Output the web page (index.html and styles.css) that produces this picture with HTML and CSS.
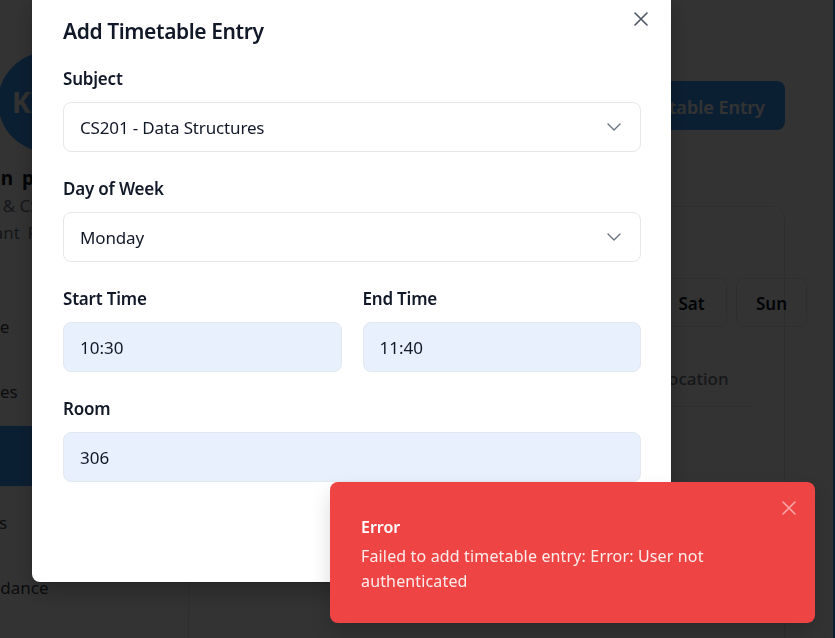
FILE: index.html
```html
<!DOCTYPE html>
<html lang="en">
<head>
<meta charset="utf-8">
<title>Timetable</title>
<link rel="stylesheet" href="styles.css">
</head>
<body>
<div class="app">
  <aside class="sidebar">
    <div class="profile">
      <div class="avatar">KI</div>
      <div class="name">Kiran patel</div>
      <div class="dept">IT &amp; CSE</div>
      <div class="role">Assistant Professor</div>
    </div>
    <nav class="nav">
      <a class="nav-item i-home">Home</a>
      <a class="nav-item i-classes">Classes</a>
      <a class="nav-item active">Timetable</a>
      <a class="nav-item i-marks">Marks</a>
      <a class="nav-item i-att">Attendance</a>
    </nav>
  </aside>
  <main class="main">
    <header class="page-head">
      <h1 class="page-title">Timetable</h1>
      <button class="btn-primary">Add Timetable Entry</button>
    </header>
    <section class="card">
      <h2 class="card-title">Weekly Schedule</h2>
      <div class="days">
        <span class="day">Mon</span><span class="day">Tue</span><span class="day">Wed</span><span class="day">Thu</span><span class="day">Fri</span><span class="day">Sat</span><span class="day">Sun</span>
      </div>
      <div class="table-head">
        <span class="th">Subject</span><span class="th">Time</span><span class="th">Room</span><span class="th th-loc">Location</span>
      </div>
    </section>
  </main>
  <div class="edge"></div>
</div>

<div class="overlay"></div>

<div class="modal">
  <button class="modal-close" aria-label="Close">
    <svg viewBox="0 0 24 24" width="24" height="24"><path d="M18 6L6 18M6 6l12 12"/></svg>
  </button>
  <h2 class="modal-title">Add Timetable Entry</h2>
  <div class="field">
    <label class="label">Subject</label>
    <div class="select"><span>CS201 - Data Structures</span>
      <svg viewBox="0 0 24 24" width="24" height="24"><path d="M6 9l6 6 6-6"/></svg></div>
  </div>
  <div class="field">
    <label class="label">Day of Week</label>
    <div class="select"><span>Monday</span>
      <svg viewBox="0 0 24 24" width="24" height="24"><path d="M6 9l6 6 6-6"/></svg></div>
  </div>
  <div class="row2">
    <div class="field">
      <label class="label">Start Time</label>
      <div class="input">10:30</div>
    </div>
    <div class="field">
      <label class="label">End Time</label>
      <div class="input">11:40</div>
    </div>
  </div>
  <div class="field">
    <label class="label">Room</label>
    <div class="input">306</div>
  </div>
  <div class="modal-foot">
    <button class="btn-ghost">Cancel</button>
    <button class="btn-save">Add Entry</button>
  </div>
</div>

<div class="toast">
  <button class="toast-close" aria-label="Close">
    <svg viewBox="0 0 24 24" width="24" height="24"><path d="M18 6L6 18M6 6l12 12"/></svg>
  </button>
  <div class="toast-title">Error</div>
  <div class="toast-msg">Failed to add timetable entry: Error: User not authenticated</div>
</div>
</body>
</html>
```

FILE: styles.css
```css
* { box-sizing: border-box; margin: 0; padding: 0; }
html, body { width: 835px; height: 638px; overflow: hidden; }
body {
  font-family: "Noto Sans", "Open Sans", sans-serif;
  background: #ffffff;
  color: #111827;
  font-size: 17px;
}
button { font-family: inherit; border: none; background: none; }

.app { display: flex; height: 638px; }

/* ---------- background page ---------- */
.sidebar {
  width: 188px;
  flex-shrink: 0;
  overflow: hidden;
  display: flex;
  flex-direction: column;
}
.profile { padding-top: 52px; display: flex; flex-direction: column; }
.avatar {
  width: 100px; height: 100px; border-radius: 50%;
  background: #3b9cff; color: #ffffff;
  font-weight: 700; font-size: 28px;
  display: flex; align-items: center; padding-left: 14px;
  margin-left: -2px;
}
.name { font-weight: 700; font-size: 19px; line-height: 27px; margin-top: 13px; margin-left: -37px; white-space: nowrap; word-spacing: 4px; }
.dept { color: #6b7280; line-height: 27px; margin-left: -17px; white-space: nowrap; }
.role { color: #6b7280; line-height: 27px; margin-left: -52px; white-space: nowrap; word-spacing: 3px; }

.nav { display: flex; flex-direction: column; gap: 5px; margin-top: 50px; }
.nav-item {
  height: 60px; display: flex; align-items: center;
  color: #374151; white-space: nowrap; font-size: 17px;
}
.i-home { margin-left: -39px; }
.i-classes { margin-left: -41px; }
.i-marks { margin-left: -42px; }
.i-att { margin-left: -43px; }
.nav-item.active { background: #3b9cff; color: #ffffff; padding-left: 60px; }
.i-marks, .i-att { position: relative; top: 1px; }

.main { flex: 1; padding: 81px 48px 0 0; min-width: 0; }
.page-head { display: flex; justify-content: space-between; align-items: center; height: 49px; }
.page-title { font-size: 26px; font-weight: 700; padding-left: 24px; }
.btn-primary {
  height: 49px; padding: 3px 20px 0; border-radius: 8px;
  background: #3b9cff; color: #ffffff; font-size: 18px; font-weight: 600;
}
.card {
  margin-top: 76px; border: 1px solid #e5e7eb; border-radius: 12px;
  padding: 25px 31px 0; height: 460px;
}
.card-title { font-size: 18px; line-height: 23px; font-weight: 600; margin-bottom: 23px; }
.days { display: flex; gap: 9px; justify-content: flex-end; margin-right: -54px; }
.day {
  flex: 0 0 71px; height: 49px; border: 1px solid #e5e7eb; border-radius: 8px;
  display: flex; align-items: center; justify-content: center;
  font-weight: 600; color: #111827; padding-top: 2px;
}
.table-head {
  margin-top: 24px; height: 56px; border-bottom: 1px solid #e5e7eb;
  display: flex; align-items: center; color: #6b7280; font-weight: 500;
}
.th { flex: 1; }
.th-loc { flex: 0 0 94px; }

.edge { width: 2px; background: #3b9cff; flex-shrink: 0; }

/* ---------- overlay ---------- */
.overlay { position: fixed; inset: 0; background: rgba(0, 0, 0, 0.8); }

/* ---------- modal ---------- */
.modal {
  position: fixed; left: 32px; top: -8px; width: 639px;
  background: #ffffff; border-radius: 8px;
  padding: 24px 30px 36px 31px;
  box-shadow: 0 1px 2px rgba(0,0,0,0.2), 0 10px 25px rgba(0,0,0,0.25);
}
.modal-close {
  position: absolute; top: 15px; right: 18px;
  width: 24px; height: 24px; display: flex;
}
.modal-close svg { fill: none; stroke: #4b5563; stroke-width: 1.6; stroke-linecap: round; }
.modal-title { font-size: 21px; letter-spacing: -0.4px; font-weight: 600; line-height: 30px; margin-bottom: 20px; color: #111827; }
.field { display: flex; flex-direction: column; margin-bottom: 24px; }
.label { font-size: 17px; font-weight: 600; line-height: 24px; margin-bottom: 12px; color: #111827; letter-spacing: -0.2px; padding-top: 1px; }
.select, .input {
  height: 50px; border: 1px solid #e5e7eb; border-radius: 8px;
  display: flex; align-items: center; padding: 0 14px 0 16px;
  font-size: 17px; color: #111827;
}
.label + .select, .label + .input { margin-top: -1px; }
.select { justify-content: space-between; background: #ffffff; }
.select span { letter-spacing: -0.15px; }
.select svg { fill: none; stroke: #6b7280; stroke-width: 1.4; stroke-linecap: round; stroke-linejoin: round; }
.input { background: #e8f0fe; border-color: #e3e8f0; }
.row2 { display: grid; grid-template-columns: 1fr 1fr; gap: 21px; }
.modal-foot { display: flex; justify-content: flex-end; gap: 12px; }
.btn-ghost, .btn-save { height: 40px; padding: 0 18px; border-radius: 8px; font-size: 16px; }
.btn-ghost { border: 1px solid #e5e7eb; }
.btn-save { background: #1e3a5f; color: #fff; }

/* ---------- toast ---------- */
.toast {
  position: fixed; right: 20px; bottom: 15px; width: 485px; height: 141px;
  background: #ef4444; border-radius: 8px; color: #ffffff;
  padding: 33px 31px 0 31px;
  box-shadow: 0 10px 20px rgba(0,0,0,0.15);
}
.toast-close { position: absolute; top: 14px; right: 14px; width: 24px; height: 24px; display: flex; }
.toast-close svg { fill: none; stroke: rgba(255,255,255,0.55); stroke-width: 1.5; stroke-linecap: round; }
.toast-title { font-size: 16px; font-weight: 600; line-height: 24px; margin-bottom: 5px; }
.toast-msg { font-size: 16px; line-height: 25px; color: rgba(255,255,255,0.9); letter-spacing: 0.15px; }
```
